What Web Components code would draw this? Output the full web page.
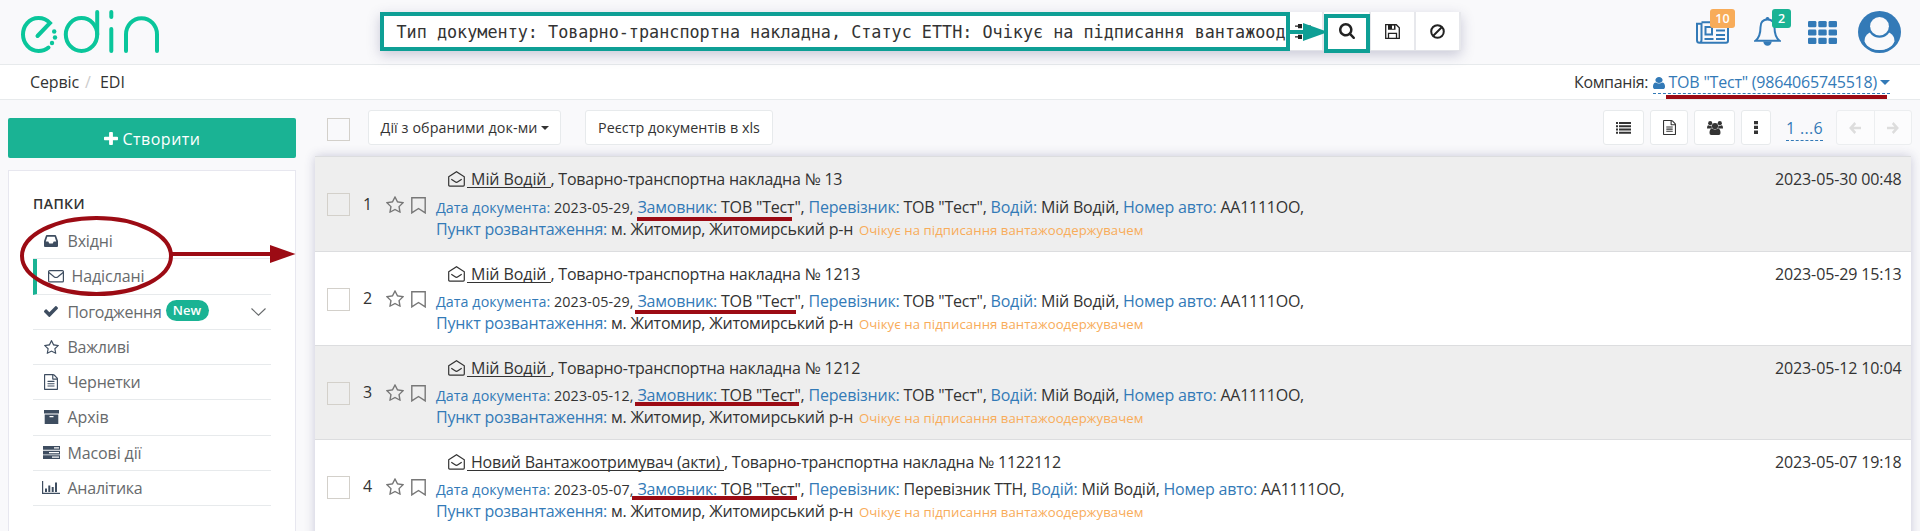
<!DOCTYPE html>
<html lang="uk">
<head>
<meta charset="utf-8">
<title>EDIN</title>
<style>
html,body{margin:0;height:531px;overflow:hidden}
body{background:#f9f9fb;color:#333;font:16px/22px "Open Sans","Noto Sans",sans-serif}
</style>
</head>
<body>
<edin-app></edin-app>
<script>
const define = (name, css, html, after) => {
  const t = document.createElement('template');
  t.innerHTML = `<style>*{box-sizing:border-box}${css}</style>${html}`;
  customElements.define(name, class extends HTMLElement {
    constructor() {
      super();
      this.attachShadow({mode: 'open'}).append(t.content.cloneNode(true));
    }
    connectedCallback() { if (after) after.call(this, this.shadowRoot); }
  });
};

/* Icons: [viewBox, markup] */
const ICONS = {
  search: ['64 128 1664 1664', '<path d="M1216 832q0-185-131.500-316.500t-316.500-131.500-316.500 131.500-131.500 316.500 131.500 316.500 316.500 131.500 316.500-131.500 131.500-316.500zm512 832q0 52-38 90t-90 38q-54 0-90-38l-343-342q-179 124-399 124-143 0-273.500-55.500t-225-150-150-225-55.500-273.500 55.500-273.500 150-225 225-150 273.500-55.500 273.500 55.500 225 150 150 225 55.500 273.500q0 220-124 399l343 343q37 37 37 90z"/>'],
  star: ['64 32 1664 1590', '<path d="M1201 1004l306-297-422-62-189-382-189 382-422 62 306 297-73 421 378-199 377 199zm527-357q0 22-26 48l-363 354 86 500q1 7 1 20 0 50-41 50-19 0-40-12l-449-236-449 236q-22 12-40 12-21 0-31.500-14.500t-10.500-35.500q0-6 2-20l86-500-364-354q-25-27-25-48 0-37 56-46l502-73 225-455q19-41 49-41t49 41l225 455 502 73q56 9 56 46z"/>'],
  user: ['256 0 1280 1664', '<path d="M1536 1399q0 109-62.500 187t-150.500 78h-854q-88 0-150.500-78t-62.500-187q0-85 8.500-160.500t31.500-152 58.500-131 94-89 134.500-34.500q131 128 313 128t313-128q76 0 134.500 34.500t94 89 58.500 131 31.500 152 8.500 160.500zm-256-887q0 159-112.500 271.500t-271.500 112.500-271.500-112.500-112.500-271.500 112.500-271.500 271.500-112.500 271.500 112.500 112.500 271.500z"/>'],
  check: ['121 334 1550 1188', '<path d="M1671 566q0 40-28 68l-724 724-136 136q-28 28-68 28t-68-28l-136-136-362-362q-28-28-28-68t28-68l136-136q28-28 68-28t68 28l294 295 656-657q28-28 68-28t68 28l136 136q28 28 28 68z"/>'],
  plus: ['192 128 1408 1408', '<path d="M1600 736v192q0 40-28 68t-68 28h-416v416q0 40-28 68t-68 28h-192q-40 0-68-28t-28-68v-416h-416q-40 0-68-28t-28-68v-192q0-40 28-68t68-28h416v-416q0-40 28-68t68-28h192q40 0 68 28t28 68v416h416q40 0 68 28t28 68z"/>'],
  file: ['128 0 1536 1792', '<path d="M1596 380q28 28 48 76t20 88v1152q0 40-28 68t-68 28h-1344q-40 0-68-28t-28-68v-1600q0-40 28-68t68-28h896q40 0 88 20t76 48zm-444-244v376h376q-10-29-22-41l-313-313q-12-12-41-22zm384 1528v-1024h-416q-40 0-68-28t-28-68v-416h-768v1536h1280zm-1024-864q0-14 9-23t23-9h704q14 0 23 9t9 23v64q0 14-9 23t-23 9h-704q-14 0-23-9t-9-23v-64zm736 224q14 0 23 9t9 23v64q0 14-9 23t-23 9h-704q-14 0-23-9t-9-23v-64q0-14 9-23t23-9h704zm0 256q14 0 23 9t9 23v64q0 14-9 23t-23 9h-704q-14 0-23-9t-9-23v-64q0-14 9-23t23-9h704z"/>'],
  caret: ['0 0 10 5', '<path d="M0 0h10l-5 5z"/>'],
  sliders: ['0 0 16 14', '<path d="M0 1.500h3v-1.500h4v4h-4v-1.500h-3zM8 1.500h8v1.500h-8zM0 6.300h9v-1.300h4v4h-4v-1.300h-9zM0 11.500h3v-1.500h4v4h-4v-1.500h-3zM8 11.500h8v1.500h-8z"/>'],
  save: ['0 0 15 15', '<path fill="none" stroke="currentColor" stroke-width="1.300" d="M.7.700h10.600l3 3v10.600H.7zM3.500 14V9.300h8V14"/><path fill-rule="evenodd" d="M3 .7h7.500v5H3zM7 1.500v3.200h2V1.500z"/>'],
  ban: ['0 0 15 15', '<g fill="none" stroke="currentColor" stroke-width="2"><circle cx="7.500" cy="7.500" r="6.300"/><path d="M3 12l9-9"/></g>'],
  news: ['0 0 33 23', '<path fill="none" stroke="currentColor" stroke-width="2" d="M5.500 1.200h24.500q2 0 2 2v16.600q0 2-2 2h-26.500q-2.500 0-2.500-2.500v-16.500h4.500v16q0 2.800-2 2.900"/><path fill="none" stroke="currentColor" stroke-width="2" d="M9.500 6h6.500v7.500h-6.500z"/><path d="M20 8.500h9v2h-9zM20 13h9v2h-9zM8.500 17h9v2h-9zM20 17h9v2h-9zM20 5h9v1.500h-9z"/>'],
  bell: ['0 0 27 29', '<path d="M11.700 2.500a1.900 1.900 0 113.600 0z"/><path fill="none" stroke="currentColor" stroke-width="2" d="M1.500 23.700q5-4 5-13.500 0-7.600 7-7.600t7 7.600q0 9.500 5 13.500z"/><path d="M9.300 24.500h8.400a4.200 4.200 0 01-8.400 0z"/>'],
  grid: ['0 0 29 23', [0, 10.300, 20.600].map(x => [0, 8.400, 16.800].map(y => `<rect x="${x}" y="${y}" width="8.400" height="6.200" rx="1.300"/>`).join('')).join('')],
  avatar: ['0 0 42 42', '<circle cx="21" cy="21" r="21"/><ellipse cx="21" cy="29" rx="14.500" ry="10" fill="#f9f9fb"/><path fill="#f9f9fb" d="M12 22q-5 3-5.500 8.500 5 8.500 14.500 8.500t14.500-8.500q-.5-5.500-5.500-8.500z"/><circle cx="21" cy="15.500" r="11.200"/><circle cx="21" cy="15.300" r="9.200" fill="#f9f9fb"/>'],
  inbox: ['0 0 14 12', '<path fill-rule="evenodd" d="M2.800 0h8.400q.6 0 .9.700L14 6v5q0 1-1 1H1q-1 0-1-1V6L1.900.700q.3-.7.900-.7zM3.300 1.800L1.800 6.400h2.500l1 2h3.400l1-2h2.500l-1.500-4.600z"/>'],
  mail: ['0 0 16 12.500', '<g fill="none" stroke="currentColor" stroke-width="1.200"><rect x=".6" y=".6" width="14.800" height="11.300" rx="1"/><path d="M.8 2.500q3 2.300 5.200 4.200 2 1.600 4 0 2.200-1.900 5.200-4.200"/></g>'],
  archive: ['0 0 15 13', '<path fill-rule="evenodd" d="M0 0h15v3.300H0zM.7 4.100h13.600V13H.7zM5.500 5.500v1.300h4V5.500z"/>'],
  tasks: ['0 0 17 13', '<path fill-rule="evenodd" d="M0 0h17v3.700H0zM11 1.200v1.300h5V1.200zM0 4.700h17v3.700H0zM6 5.900v1.300h10V5.900zM0 9.300h17V13H0zM9 10.500v1.300h7v-1.300z"/>'],
  chart: ['0 0 18 13', '<path d="M0 0h1.200v11.800H18V13H0zM3 7.500h2V11H3zM6.300 4.500h2V11h-2zM9.700 6h2v5h-2zM13 1.500h2V11h-2z"/>'],
  chevron: ['0 0 15 8', '<path fill="none" stroke="currentColor" stroke-width="1.100" d="M.5.500l7 6.700 7-6.700"/>'],
  list: ['0 0 15 12', '<path d="M0 0h2v2H0zM3 0h12v2H3zM0 3.200h2v2H0zM3 3.200h12v2H3zM0 6.500h2v2H0zM3 6.500h12v2H3zM0 9.800h2v2H0zM3 9.800h12v2H3z"/>'],
  group: ['0 0 16 14', '<circle cx="3.200" cy="2.200" r="2.100"/><circle cx="12.800" cy="2.200" r="2.100"/><path d="M0 7.500Q0 4.300 1.500 4.200q2 1 3.200.3-.5 2.300.8 3H1Q0 7.600 0 7.500zM16 7.500q0-3.200-1.500-3.300-2 1-3.200.3.500 2.300-.8 3H15q1 .1 1 0z"/><circle cx="8" cy="5" r="3.100"/><path d="M4.300 14q-1.800 0-1.800-2 0-4.400 2.700-4.500 2.800 1.800 5.600 0 2.700.1 2.700 4.500 0 2-1.800 2z"/>'],
  dots: ['0 0 4 13', '<path d="M0 0h4v3.300H0zM0 4.800h4v3.300H0zM0 9.600h4v3.300H0z"/>'],
  left: ['0 0 13 12', '<path fill="none" stroke="currentColor" stroke-width="2.600" d="M6.800 1L1.900 6l4.900 5M2.500 6H13"/>'],
  right: ['0 0 13 12', '<path fill="none" stroke="currentColor" stroke-width="2.600" d="M6.200 1l4.900 5-4.900 5M10.500 6H0"/>'],
  bookmark: ['0 0 15 17', '<path fill="none" stroke="currentColor" stroke-width="1.400" d="M.8.700h13.400v15.200L7.500 11.500.8 15.900z"/>'],
  open: ['0 0 17 16', '<g fill="none" stroke="currentColor" stroke-width="1.200"><path d="M.7 5.800L8.500.7l7.800 5.100v8.300q0 1-1 1H1.700q-1 0-1-1z"/><path d="M3.300 8.200l3.800 2.600q1.400 1 2.800 0l3.800-2.600"/></g>']
};

customElements.define('ui-icon', class extends HTMLElement {
  connectedCallback() {
    if (this.shadowRoot) return;
    const [box, body] = ICONS[this.getAttribute('name')];
    const w = this.getAttribute('w'), h = this.getAttribute('h');
    this.attachShadow({mode: 'open'}).innerHTML =
      `<style>:host{display:block;flex:none;width:${w}px;height:${h}px}svg{display:block}</style>
       <svg width="${w}" height="${h}" viewBox="${box}" preserveAspectRatio="none" fill="currentColor">${body}</svg>`;
  }
});

/* Text run whose tracking is adjusted so that it occupies the given width */
customElements.define('ui-run', class extends HTMLElement {
  connectedCallback() {
    if (this.shadowRoot) return;
    const w = +this.getAttribute('w');
    this.attachShadow({mode: 'open'}).innerHTML =
      `<style>:host{display:block;flex:none;white-space:pre;width:${w}px}span{display:inline-block;text-decoration:inherit}</style><span><slot></slot></span>`;
    const s = this.shadowRoot.querySelector('span');
    const natural = s.getBoundingClientRect().width;
    s.style.letterSpacing = ((w - natural) / this.textContent.length).toFixed(3) + 'px';
  }
});

define('edin-logo', ':host{display:block;width:140px;height:44px}svg{display:block}', `
<svg width="140" height="44" viewBox="21 10 140 44" fill="none" stroke="#0ac69b" stroke-width="4" stroke-linecap="round">
<path d="M37.500 36L50 23Q45.500 18 38.500 18C29 18 23 26 23 34.500S29.500 51 38.500 51Q44.500 51 48.500 47.500"/>
<ellipse cx="81.500" cy="34.500" rx="15.700" ry="16.500"/><path d="M97.200 12v22.500M111.300 12v5M111.300 29v22M126 51V34.500a15.500 16.300 0 0131 0V51"/>
<g fill="#0ac69b" stroke="none"><circle cx="54.200" cy="31.500" r="2.200"/><circle cx="55" cy="37.500" r="2.200"/><circle cx="52" cy="43" r="2.200"/></g>
</svg>`);

define('search-bar', `
:host{display:flex;width:1081px;height:39px;background:#fff;border-bottom:1px solid #e2e3e8;box-shadow:0 4px 12px rgba(60,60,110,.25)}
.q{width:911px;padding:9px 0 0 16.500px;font:16.800px/22px "DejaVu Sans Mono",monospace;color:#333;white-space:pre;overflow:hidden}
.c{display:flex;align-items:center;justify-content:center;border-right:2px solid #e7e8ec;color:#222}
`, `<div class="q">Тип документу: Товарно-транспортна накладна, Статус ЕТТН: Очікує на підписання вантажоод</div>
<div class="c" style="width:33px;justify-content:flex-start;padding-left:4px"><ui-icon name="sliders" w="16" h="15"></ui-icon></div>
<div class="c" style="width:47px"><ui-icon name="search" w="16" h="16"></ui-icon></div>
<div class="c" style="width:45px"><ui-icon name="save" w="15" h="15"></ui-icon></div>
<div class="c" style="width:45px"><ui-icon name="ban" w="15" h="15"></ui-icon></div>`);

define('count-badge', `
:host{position:absolute;top:-12px;display:block;height:19px;border-radius:3px;color:#fff;text-align:center;font-size:12.500px;line-height:19px;font-weight:600}`, '<slot></slot>');

define('app-header', `
:host{display:flex;height:65px;border-bottom:1px solid #e7eaec;padding:0 19px 0 21px}
edin-logo{margin-top:10px}search-bar{margin:12px 0 0 219px}
.r{display:flex;margin-left:auto;color:#337ab7}.i{position:relative;margin-top:21px}`, `
<edin-logo></edin-logo><search-bar></search-bar>
<div class="r">
<div class="i" style="margin-right:25px"><ui-icon name="news" w="33" h="23"></ui-icon><count-badge style="left:14px;width:25px;background:#f8ac59">10</count-badge></div>
<div class="i" style="margin-right:27px"><ui-icon name="bell" w="27" h="29" style="margin-top:-4px"></ui-icon><count-badge style="left:18px;width:19px;background:#1ab394">2</count-badge></div>
<div class="i" style="margin-right:21px"><ui-icon name="grid" w="29" h="23"></ui-icon></div>
<ui-icon name="avatar" w="43" h="42" style="margin-top:11px"></ui-icon>
</div>`);

define('crumb-bar', `
:host{display:flex;height:35px;background:#fff;border-bottom:1px solid #e7eaec;padding:6px 30px 0 30px}
.d{display:flex;height:23px;border-bottom:1px dashed #337ab7;color:#337ab7;margin-left:5px}`, `
<ui-run w="49">Сервіс</ui-run><span style="color:#ccc;margin-left:6px">/</span><ui-run w="25" style="margin-left:9px">EDI</ui-run>
<ui-run w="74" style="margin-left:auto">Компанія:</ui-run>
<div class="d"><ui-icon name="user" w="12" h="13" style="margin-top:5px"></ui-icon><ui-run w="208.500" style="margin-left:3.500px">ТОВ "Тест" (9864065745518)</ui-run><ui-icon name="caret" w="10" h="5" style="margin:9px 0 0 3px"></ui-icon></div>`);

define('folder-item', `
:host{display:flex;height:35.250px;border-bottom:1px solid #e7eaec;align-items:center;color:#676a6c;line-height:22px}
:host([active]){border-left:4px solid #1ab394}
.i{width:34.500px;display:flex;justify-content:center;padding-left:2px;color:#3e4d60}
:host([active]) .i{padding-left:3px}
.t{display:flex;flex:1;align-items:center}`, `<div class="i"><slot name="icon"></slot></div><div class="t"><slot></slot></div>`);

define('side-bar', `
:host{display:block;width:288px;margin-left:8px}
.b{display:flex;align-items:center;justify-content:center;height:40px;border-radius:2px;background:#1ab394;color:#fff;margin-top:18px;gap:5px}
.b ui-run{margin-top:1px}
.p{margin-top:12px;height:380px;background:#fff;border:1px solid #e7e7ef;padding:22px 24px 0}
h5{margin:0 0 11px 0;height:20px;font-size:14px;line-height:22px;font-weight:600}
.n{margin-left:4px;margin-top:-2px;width:43px;height:21px;border-radius:11px;background:#1ab394;color:#fff;font-size:13px;font-weight:600;line-height:20px;text-align:center}`, `
<div class="b"><ui-icon name="plus" w="14" h="13"></ui-icon><ui-run w="78">Створити</ui-run></div>
<div class="p"><h5><ui-run w="52">ПАПКИ</ui-run></h5>
<folder-item><ui-icon slot="icon" name="inbox" w="14" h="12"></ui-icon><ui-run w="45">Вхідні</ui-run></folder-item>
<folder-item active><ui-icon slot="icon" name="mail" w="16" h="12.500"></ui-icon><ui-run w="73">Надіслані</ui-run></folder-item>
<folder-item><ui-icon slot="icon" name="check" w="14" h="11"></ui-icon><ui-run w="94">Погодження</ui-run><div class="n">New</div><ui-icon name="chevron" w="15" h="8" style="margin:0 5px 0 auto"></ui-icon></folder-item>
<folder-item><ui-icon slot="icon" name="star" w="15" h="14"></ui-icon><ui-run w="62">Важливі</ui-run></folder-item>
<folder-item><ui-icon slot="icon" name="file" w="14" h="16"></ui-icon><ui-run w="73">Чернетки</ui-run></folder-item>
<folder-item><ui-icon slot="icon" name="archive" w="15" h="14"></ui-icon><ui-run w="41">Архів</ui-run></folder-item>
<folder-item><ui-icon slot="icon" name="tasks" w="17" h="13"></ui-icon><ui-run w="74">Масові дії</ui-run></folder-item>
<folder-item><ui-icon slot="icon" name="chart" w="18" h="13"></ui-icon><ui-run w="75">Аналітика</ui-run></folder-item>
</div>`);

define('tool-button', `
:host{display:flex;align-items:center;justify-content:center;height:35px;background:#fff;border:1px solid #e7eaec;border-radius:3px;font-size:14.300px}`, '<slot></slot>');

define('tool-bar', `
:host{display:flex;height:56px;padding:10px 0 0 12px;color:#333}
.k{width:23px;height:23px;border:1px solid #d3d0ca;margin-top:8px}
.g{display:flex;margin-left:auto}
.pg{display:flex;border:1px solid #eceef0;border-radius:3px;width:76px;height:35px;background:#fcfcfd;color:#ddd}
.pg div{flex:1;display:flex;align-items:center;justify-content:center}.pg div+div{border-left:1px solid #eceef0}
.n{margin:6px 13px 0 15px;height:25px;border-bottom:1px dashed #337ab7;color:#337ab7;width:37px}
.n ui-run{padding-top:1px}`, `
<div class="k"></div>
<tool-button style="width:193px;margin-left:18px"><ui-run w="157">Дії з обраними док-ми</ui-run><ui-icon name="caret" w="8" h="4" style="margin-left:3px"></ui-icon></tool-button>
<tool-button style="width:188px;margin-left:24px"><ui-run w="162">Реєстр документів в xls</ui-run></tool-button>
<div class="g">
<tool-button style="width:41px;margin-right:6px"><ui-icon name="list" w="15" h="12"></ui-icon></tool-button>
<tool-button style="width:38px;margin-right:6px"><ui-icon name="file" w="13" h="15"></ui-icon></tool-button>
<tool-button style="width:41px;margin-right:6px"><ui-icon name="group" w="16" h="14"></ui-icon></tool-button>
<tool-button style="width:30px"><ui-icon name="dots" w="4" h="13"></ui-icon></tool-button>
<div class="n"><ui-run w="37">1 ...6</ui-run></div>
<div class="pg"><div><ui-icon name="left" w="12" h="12"></ui-icon></div><div><ui-icon name="right" w="12" h="12"></ui-icon></div></div>
</div>`);

define('doc-row', `
:host{display:flex;height:94px;border-top:1px solid #dcdddf;background:#fff}
:host([alt]){background:#eee}
:host([first]){height:95px}
:host([first]) .x{margin-bottom:6px}
:host([first]) .m{padding-top:1px}
.k{width:23px;height:23px;border:1px solid #d3d0ca;margin:36px 0 0 12px}
.m{display:flex;color:#333}
.num{width:10px;margin:35px 0 0 13px;line-height:22px}
.s{display:flex;color:#777;margin:38px 0 0 13px;gap:7px}
.b{margin:11px 0 0 10px;flex:1}
.l{display:flex;align-items:baseline;height:22px}
.x{margin-bottom:5px;padding-left:12px}
.x ui-icon{align-self:flex-start;margin-top:3px;margin-right:2px}
u{display:block;text-decoration:none;height:20px;border-bottom:1px solid #333;align-self:flex-start}
.a{color:#337ab7}.sm{font-size:14.300px}.o{color:#f8ac59;font-size:13.200px;margin-left:2px}
.date{margin:11px 9.500px 0 0}`, `
<div class="k"></div>
<div class="m"><div class="num"><slot name="num"></slot></div>
<div class="s"><ui-icon name="star" w="18" h="17"></ui-icon><ui-icon name="bookmark" w="15" h="17" style="margin-top:1px"></ui-icon></div></div>
<div class="b">
<div class="l x"></div><div class="l y"></div>
<div class="l"><ui-run class="a" w="175">Пункт розвантаження: </ui-run><ui-run w="246">м. Житомир, Житомирський р-н </ui-run><ui-run class="o" w="284.500">Очікує на підписання вантажоодержувачем</ui-run></div>
</div>
<div class="date"></div>`, function (r) {
  const g = n => this.getAttribute(n);
  const [who, whoW] = g('party').split('|'), [num, numW] = g('doc').split('|'), [car, carW] = g('carrier').split('|');
  r.querySelector('.x').innerHTML = `<ui-icon name="open" w="17" h="16"></ui-icon><u><ui-run w="${whoW}"> ${who} </ui-run></u><ui-run w="274">, Товарно-транспортна накладна № </ui-run><ui-run w="${numW}">${num}</ui-run>`;
  r.querySelector('.y').innerHTML = [
    ['a sm', 118, 'Дата документа: '], ['sm', 83.500, g('day') + ', '],
    ['a', 83.500, 'Замовник: '], ['', 87.500, 'ТОВ "Тест", '],
    ['a', 95, 'Перевізник: '], ['', carW, car + ', '],
    ['a', 50.500, 'Водій: '], ['', 82, 'Мій Водій, '],
    ['a', 97.500, 'Номер авто: '], ['', 83.500, 'АА1111ОО,']
  ].map(([c, w, t]) => `<ui-run class="${c}" w="${w}">${t}</ui-run>`).join('');
  r.querySelector('.date').innerHTML = `<ui-run w="126.500">${g('stamp')}</ui-run>`;
});

define('doc-list', `
:host{display:block;width:1596px;height:400px;background:#fff;box-shadow:0 0 10px rgba(50,50,110,.24)}`, `
<doc-row alt first party="Мій Водій|83.500" doc="13|17.500" carrier='ТОВ "Тест"|87' day="2023-05-29" stamp="2023-05-30 00:48"><span slot="num">1</span></doc-row>
<doc-row party="Мій Водій|83.500" doc="1213|35.500" carrier='ТОВ "Тест"|87' day="2023-05-29" stamp="2023-05-29 15:13"><span slot="num">2</span></doc-row>
<doc-row alt party="Мій Водій|83.500" doc="1212|35.500" carrier='ТОВ "Тест"|87' day="2023-05-12" stamp="2023-05-12 10:04"><span slot="num">3</span></doc-row>
<doc-row party="Новий Вантажоотримувач (акти)|257" doc="1122112|63" carrier="Перевізник ТТН|127.500" day="2023-05-07" stamp="2023-05-07 19:18"><span slot="num">4</span></doc-row>`);

/* Walkthrough marks drawn over the interface */
define('guide-marks', ':host{position:absolute;left:0;top:0;width:1920px;height:531px;pointer-events:none}svg{display:block}', `
<svg width="1920" height="531" viewBox="0 0 1920 531" fill="none">
<g stroke="#0e9f95" stroke-width="4"><path d="M382 14h906v35H382zM1326 16h42v35h-42zM1290 32h16"/></g>
<path fill="#0e9f95" d="M1303 23l25 9-25 9z"/>
<g stroke="#9c0b14" stroke-width="4"><ellipse cx="96.500" cy="256" rx="74.500" ry="38"/><path d="M172 254h99M1666 97h221M637 219h155M635 312h161M635 404h164M632 498h165"/></g>
<path fill="#9c0b14" d="M270 245l25.500 9-25.500 9z"/>
</svg>`);

define('edin-app', ':host{display:block;position:relative;width:1920px;height:531px;overflow:hidden}.w{display:flex}.c{margin-left:19px;width:1597px}', `
<app-header></app-header><crumb-bar></crumb-bar>
<div class="w"><side-bar></side-bar><div class="c"><tool-bar></tool-bar><doc-list></doc-list></div></div>
<guide-marks></guide-marks>`);
</script>
</body>
</html>
